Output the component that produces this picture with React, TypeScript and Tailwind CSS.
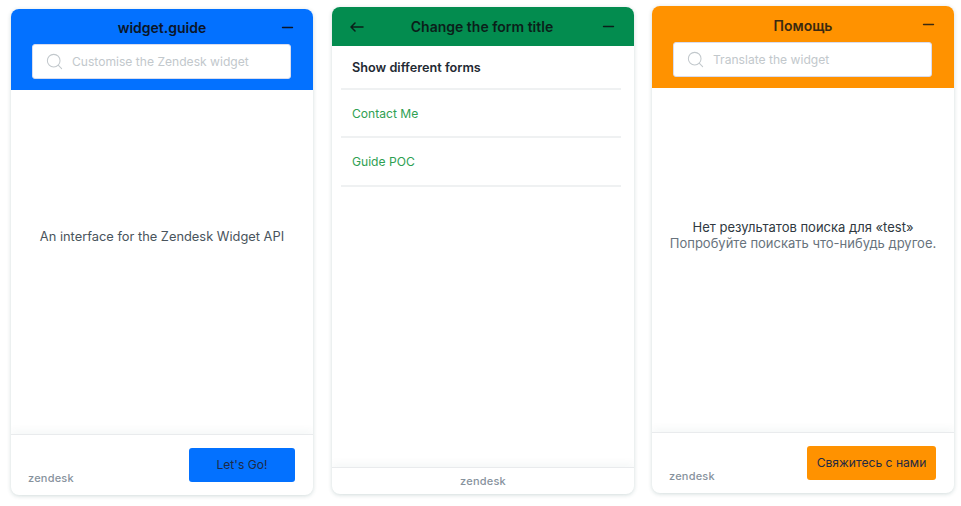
import { Minus, Search } from 'lucide-react';
import type { ReactNode } from 'react';

function SearchBox({ placeholder }: { placeholder: string }) {
  return (
    <div className="ml-[21px] mr-[22px] flex h-[35px] items-center rounded-[3px] border border-[#d8dcee] bg-white pl-[12px]">
      <Search className="h-[19px] w-[19px] text-[#c2c8cc]" strokeWidth={1.3} />
      <span className="ml-[8px] pt-px text-[12.1px] text-[#c2c8cc]">{placeholder}</span>
    </div>
  );
}

function Panel({ className, children }: { className: string; children: ReactNode }) {
  return (
    <div className={`flex w-[302px] flex-col overflow-hidden rounded-[8px] bg-white shadow-[0_1px_4px_rgba(23,73,77,0.2)] ${className}`}>
      {children}
    </div>
  );
}

function Footer({ color, label }: { color: string; label: string }) {
  return (
    <div className="flex h-[61px] items-start justify-between border-t border-[#e9ebed] pl-[17px] pr-[18px] pt-[13px] shadow-[0_-4px_8px_rgba(23,73,77,0.04)]">
      <span className="mt-[23px] text-[11px] font-medium leading-[14px] tracking-[0.2px] text-[#87929d]">zendesk</span>
      <button className={`h-[34px] whitespace-nowrap rounded-[3px] text-[12.1px] text-[#1f2a44] ${color}`}>{label}</button>
    </div>
  );
}

export default function App() {
  return (
    <div className="flex h-[506px] w-[961px] items-start gap-[18px] overflow-hidden bg-white pl-[11px] font-['Inter',sans-serif]">
      <Panel className="mt-[9px] h-[486px]">
        <div className="h-[81px] bg-[#0371ff]">
          <div className="relative flex h-[35px] items-center justify-center pt-[2px] text-[14px] font-semibold leading-[20px] text-[#0b1526]">
            widget.guide
            <Minus className="absolute right-[17px] top-[10px] h-[17px] w-[17px]" strokeWidth={2} />
          </div>
          <SearchBox placeholder="Customise the Zendesk widget" />
        </div>
        <div className="flex flex-1 items-center justify-center pb-[50px] text-[12.85px] text-[#49545c]">
          An interface for the Zendesk Widget API
        </div>
        <Footer color="w-[106px] bg-[#0371ff]" label="Let's Go!" />
      </Panel>

      <Panel className="ml-px mt-[7px] h-[487px]">
        <div className="flex h-[39px] items-center justify-between bg-[#038c4f] pl-[18px] pr-[17px] text-[#0b1f1a]">
          <svg className="h-[10px] w-[14px]" viewBox="0 0 14 10" fill="none" stroke="currentColor" strokeWidth="1.5" strokeLinecap="round" strokeLinejoin="round">
            <path d="M1 5h12M5 1 1 5l4 4" />
          </svg>
          <span className="text-[14px] font-semibold">Change the form title</span>
          <Minus className="h-[17px] w-[17px]" strokeWidth={2} />
        </div>
        <div className="ml-[9px] mr-[13px] flex-1 text-[12.1px]">
          <div className="flex h-[44px] items-center border-b-2 border-[#eff1f2] pl-[11px] pt-[2px] text-[12.7px] font-semibold text-[#1f2a33]">
            Show different forms
          </div>
          <div className="flex h-[48px] items-center border-b-2 border-[#eff1f2] pl-[11px] pt-[3px] text-[#2ea052]">
            Contact Me
          </div>
          <div className="flex h-[49px] items-center border-b-2 border-[#eff1f2] pl-[11px] pt-[2px] text-[#2ea052]">
            Guide POC
          </div>
        </div>
        <div className="flex h-[27px] items-center justify-center border-t border-[#e9ebed] text-[11px] font-medium tracking-[0.2px] text-[#87929d] shadow-[0_-4px_8px_rgba(23,73,77,0.04)]">
          zendesk
        </div>
      </Panel>

      <Panel className="mt-[6px] h-[487px]">
        <div className="h-[82px] bg-[#ff9200]">
          <div className="relative flex h-[36px] items-center justify-center pt-[3px] text-[14px] font-semibold leading-[20px] text-[#3b2a10]">
            Помощь
            <Minus className="absolute right-[17px] top-[10px] h-[17px] w-[17px]" strokeWidth={2} />
          </div>
          <SearchBox placeholder="Translate the widget" />
        </div>
        <div className="flex flex-1 flex-col items-center justify-center pb-[50px] text-[13px] leading-[16px]">
          <span className="text-[#2f3941]">Нет результатов поиска для «test»</span>
          <span className="text-[#68737d]">Попробуйте поискать что-нибудь другое.</span>
        </div>
        <Footer color="w-[129px] bg-[#ff9200]" label="Свяжитесь с нами" />
      </Panel>
    </div>
  );
}
